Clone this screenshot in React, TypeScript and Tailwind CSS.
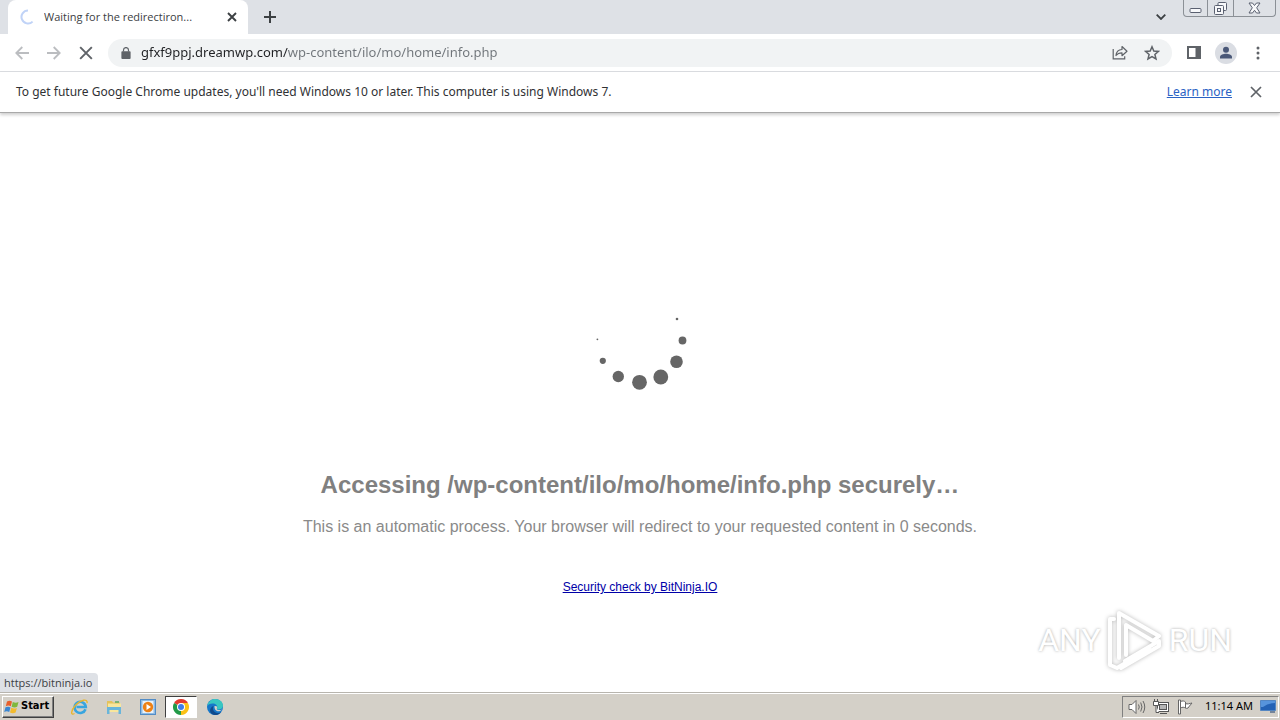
import type { ReactNode } from "react";

interface Dot {
  x: number;
  y: number;
  r: number;
}

const DOTS: Dot[] = [
  { x: 87, y: 29, r: 1.3 },
  { x: 92.5, y: 50.5, r: 3.9 },
  { x: 86.5, y: 71.7, r: 6.3 },
  { x: 70.8, y: 87, r: 7.4 },
  { x: 49.5, y: 92.3, r: 7.4 },
  { x: 28.3, y: 86.5, r: 5.7 },
  { x: 12.8, y: 70.8, r: 3.1 },
  { x: 7.4, y: 49.3, r: 0.9 },
];

const UI_FONT = "font-['Noto_Sans','Open_Sans',sans-serif]";
const SMALL_FONT = "font-['Open_Sans','Noto_Sans',sans-serif]";

function IconButton({ label, className = "", children }: { label: string; className?: string; children: ReactNode }) {
  return (
    <button type="button" aria-label={label} className={`flex shrink-0 items-center justify-center ${className}`}>
      {children}
    </button>
  );
}

function CloseIcon({ className = "" }: { className?: string }) {
  return (
    <svg viewBox="0 0 12 12" className={className} fill="none" stroke="currentColor" strokeWidth="1.7">
      <path d="M1 1l10 10M11 1L1 11" />
    </svg>
  );
}

function TabStrip() {
  return (
    <div className="flex h-[34px] bg-[#dee1e6] pl-2">
      <div className="flex w-60 items-center rounded-t-lg bg-white pr-2 pl-3">
        <svg viewBox="0 0 16 16" className="h-4 w-4" fill="none" stroke="#c0d3f7" strokeWidth="2">
          <path d="M8 1.5A6.5 6.5 0 1 0 12.6 12.6" />
        </svg>
        <span className={`ml-2 flex-1 truncate text-[11px] text-[#3c4043] ${SMALL_FONT}`}>Waiting for the redirectiron...</span>
        <IconButton label="Close tab" className="h-4 w-4 text-[#3c4043]">
          <svg viewBox="0 0 10 10" className="h-2.5 w-2.5" stroke="currentColor" strokeWidth="1.9">
            <path d="M1 1l8 8M9 1L1 9" />
          </svg>
        </IconButton>
      </div>
      <IconButton label="New tab" className="ml-2 h-[34px] w-7 text-[#3c4043]">
        <svg viewBox="0 0 12 12" className="h-3 w-3" stroke="currentColor" strokeWidth="2">
          <path d="M6 0v12M0 6h12" />
        </svg>
      </IconButton>
      <div className="flex-1" />
      <IconButton label="Search tabs" className="mr-3 h-[34px] w-5 text-[#3c4043]">
        <svg viewBox="0 0 10 6" className="h-1.5 w-2.5" fill="none" stroke="currentColor" strokeWidth="1.8">
          <path d="M.7.7L5 5 9.300.7" />
        </svg>
      </IconButton>
      <div className="mr-1 flex h-[17px] rounded-b-[4px] border border-t-0 border-[#8b9096] text-[#5a6070]">
        <IconButton label="Minimize" className="w-6 border-r border-[#8b9096]">
          <svg viewBox="0 0 13 12" className="h-3 w-[13px]" fill="#f7f8fa" stroke="currentColor">
            <rect x="1" y="6.500" width="11" height="4" rx="1" />
          </svg>
        </IconButton>
        <IconButton label="Restore" className="w-[26px] border-r border-[#8b9096]">
          <svg viewBox="0 0 13 13" className="h-[13px] w-[13px]" fill="#f7f8fa" stroke="currentColor">
            <rect x="4" y=".5" width="8.500" height="8" rx="1" />
            <rect x=".5" y="3.500" width="9" height="9" rx="1" />
            <rect x="3.500" y="6.500" width="3" height="3" />
          </svg>
        </IconButton>
        <IconButton label="Close window" className="w-[41px]">
          <svg viewBox="0 0 13 12" className="h-3 w-[13px]" fill="#f7f8fa" stroke="currentColor">
            <path d="M1 1h3.500l2 2.500L8.500 1H12L8.700 5.800 12 11H8.500l-2-2.700L4.500 11H1l3.300-5.200z" />
          </svg>
        </IconButton>
      </div>
    </div>
  );
}

function Toolbar() {
  return (
    <div className="flex h-[38px] items-center border-b border-[#dadce0] bg-white pr-2.5 pl-2">
      <IconButton label="Back" className="h-7 w-7 text-[#bbbdc0]">
        <svg viewBox="0 0 14 14" className="h-3.5 w-3.5" fill="none" stroke="currentColor" strokeWidth="1.8">
          <path d="M14 7H1.500M7.300 1L1.300 7l6 6" />
        </svg>
      </IconButton>
      <IconButton label="Forward" className="ml-1 h-7 w-7 text-[#bbbdc0]">
        <svg viewBox="0 0 14 14" className="h-3.5 w-3.5" fill="none" stroke="currentColor" strokeWidth="1.8">
          <path d="M0 7h12.500M6.700 1l6 6-6 6" />
        </svg>
      </IconButton>
      <IconButton label="Stop loading" className="ml-1 h-7 w-7 text-[#5f6368]">
        <CloseIcon className="h-3.5 w-3.5" />
      </IconButton>
      <div className="ml-2 flex h-7 min-w-0 flex-1 items-center rounded-full bg-[#f1f3f4] pr-2 pl-[13px]">
        <svg viewBox="0 0 10 13" className="mr-2.5 h-3 w-2.5 shrink-0" fill="none">
          <rect x="0" y="4.500" width="10" height="8.500" rx="1" fill="#5f6368" />
          <path d="M2.300 5V3.300a2.700 2.700 0 0 1 5.400 0V5" stroke="#5f6368" strokeWidth="1.300" />
        </svg>
        <input
          type="text"
          aria-label="Address"
          defaultValue="gfxf9ppj.dreamwp.com/wp-content/ilo/mo/home/info.php"
          className="min-w-0 flex-1 bg-[linear-gradient(90deg,#202124_147px,#70757a_147px)] bg-clip-text text-[13px] text-transparent outline-none"
        />
        <IconButton label="Share" className="h-6 w-6 text-[#5f6368]">
          <svg viewBox="0 0 16 15" className="h-[15px] w-4" fill="none" stroke="currentColor" strokeWidth="1.200">
            <path d="M1.200 4v9.800h11.500v-2.500" />
            <path d="M4 10.500C4.300 6.500 6.500 4.700 10 4.500V1.500l5 4.700-5 4.500V7.800C7.300 7.800 5.500 8.500 4 10.500z" strokeLinejoin="round" />
          </svg>
        </IconButton>
        <IconButton label="Bookmark this tab" className="ml-2 h-6 w-6 text-[#5f6368]">
          <svg viewBox="0 0 16 16" className="h-4 w-4" fill="none" stroke="currentColor" strokeWidth="1.500">
            <path d="M8 1.800l1.800 4.200 4.600.4-3.500 3 1.100 4.500L8 11.500l-4 2.400 1.100-4.500-3.500-3L6.200 6z" />
          </svg>
        </IconButton>
      </div>
      <IconButton label="Side panel" className="ml-2.5 h-6 w-6">
        <svg viewBox="0 0 14 13" className="h-[13px] w-3.5">
          <path d="M0 0h14v13H0zM2 2v9h6.500V2z" fill="#5f6368" fillRule="evenodd" />
        </svg>
      </IconButton>
      <IconButton label="Profile" className="ml-2 h-6 w-6">
        <svg viewBox="0 0 22 22" className="h-[22px] w-[22px]">
          <circle cx="11" cy="11" r="11" fill="#dadde3" />
          <circle cx="11" cy="7.700" r="3" fill="#4a5878" />
          <path d="M5 16.500v-1.500c0-2.200 3.500-3.200 6-3.200s6 1 6 3.200v1.500z" fill="#4a5878" />
        </svg>
      </IconButton>
      <IconButton label="Menu" className="ml-2 h-6 w-6">
        <svg viewBox="0 0 4 14" className="h-3.5 w-1" fill="#5f6368">
          <circle cx="2" cy="2" r="1.500" />
          <circle cx="2" cy="7" r="1.500" />
          <circle cx="2" cy="12" r="1.500" />
        </svg>
      </IconButton>
    </div>
  );
}

function UpdateBar() {
  return (
    <div className="z-10 flex h-[41px] items-center border-b border-[#a9a9a9] bg-white pr-4 pl-4 text-xs text-[#303134] shadow-[0_2px_3px_#d0d0d0]">
      <p className="flex-1">To get future Google Chrome updates, you'll need Windows 10 or later. This computer is using Windows 7.</p>
      <a href="#update" className="text-[#2a62c4] underline">Learn more</a>
      <IconButton label="Dismiss" className="ml-4 h-4 w-4 text-[#5f6368]">
        <CloseIcon className="h-3 w-3" />
      </IconButton>
    </div>
  );
}

function Watermark() {
  return (
    <div className="absolute right-12 bottom-5 flex items-center font-['Roboto','Liberation_Sans',sans-serif] text-[32px] leading-none font-normal text-white [text-shadow:0_0_3px_#a8a8a8]">
      <span>ANY</span>
      <svg viewBox="0 0 60 64" className="mx-1 h-16 w-[60px] drop-shadow-[0_0_2px_#b8b8b8]" fill="none" stroke="#fff" strokeWidth="4" strokeLinejoin="round" strokeLinecap="round">
        <path d="M14 50V5l40 23-6 5-27-16v30" />
        <path d="M9 11H5v46l7 3 32-19" />
        <path d="M16 60l38-22v-5L20 53" />
      </svg>
      <span>RUN</span>
    </div>
  );
}

function RedirectPage() {
  return (
    <main className="relative flex flex-1 flex-col items-center bg-white pt-[177px] text-center font-['Liberation_Sans',Arial,sans-serif] text-[#808080]">
      <svg viewBox="0 0 100 100" className="h-[100px] w-[100px]" fill="#666" role="img" aria-label="Loading">
        {DOTS.map((dot) => (
          <circle key={dot.x} cx={dot.x} cy={dot.y} r={dot.r} />
        ))}
      </svg>
      <h1 className="mt-[81px] text-2xl leading-7 font-bold">Accessing /wp-content/ilo/mo/home/info.php securely…</h1>
      <p className="mt-4 text-base leading-6 text-[#8a8a8a]">
        This is an automatic process. Your browser will redirect to your requested content in 0 seconds.
      </p>
      <a href="https://bitninja.io" className="mt-10 text-xs leading-4 text-[#0000a8] underline">Security check by BitNinja.IO</a>
      <Watermark />
      <div className={`absolute bottom-0 left-0 rounded-tr-[4px] bg-[#dee1e6] py-px pr-1.5 pl-1 text-[11px] leading-[17px] text-[#3c4043] ${SMALL_FONT}`}>
        https://bitninja.io
      </div>
    </main>
  );
}

function Taskbar() {
  return (
    <footer className="flex h-7 items-center border-t border-[#b8b5ae] bg-[#d4d0c8] pr-px pl-0.5 text-[11px] text-black shadow-[inset_0_1px_0_#fff]">
      <button
        type="button"
        className="flex h-[22px] w-[52px] items-center gap-px border border-t-white border-r-[#404040] border-b-[#404040] border-l-white pl-px font-['DejaVu_Sans_Condensed','Noto_Sans',sans-serif] font-bold shadow-[inset_-1px_-1px_0_#808080]"
      >
        <svg viewBox="0 0 16 16" className="h-4 w-4 shrink-0">
          <path d="M3 2.500c2-1.200 3.500-1 5 0L6.800 7.300c-1.600-1-3.200-1-5-.1z" fill="#e8602c" />
          <path d="M8.800 3c2 1 3.800 1 5.700 0l-1.300 4.800c-1.900 1-3.700.9-5.600-.1z" fill="#7fb83c" />
          <path d="M1.500 8.300c1.800-.9 3.400-.9 5 .1L5.200 13c-1.600-1-3.200-1-5-.1z" fill="#3a86d2" />
          <path d="M7.300 8.800c1.900 1 3.700 1.100 5.600.1l-1.300 4.700c-1.900 1-3.700.9-5.600-.1z" fill="#f3bb2e" />
        </svg>
        Start
      </button>
      <div className="ml-[9px] flex items-center">
        <IconButton label="Internet Explorer" className="h-[22px] w-[34px]">
          <svg viewBox="0 0 18 18" className="h-[18px] w-[18px]" fill="none">
            <path d="M14.500 11.300A5.600 5.600 0 1 1 14.800 9H5.500" stroke="#38a5df" strokeWidth="2.600" />
            <path d="M3.500 15.500C-.500 18-.300 12.500 4.500 7.200 9.500 1.700 17 .200 16 5" stroke="#e9b52c" strokeWidth="1.400" />
          </svg>
        </IconButton>
        <IconButton label="File Explorer" className="h-[22px] w-[34px]">
          <svg viewBox="0 0 16 16" className="h-4 w-4">
            <path d="M1 2h5l1 1.500h7V13H1z" fill="#e4c25c" />
            <path d="M2 4.500h13V13H2z" fill="#f8e69d" />
            <path d="M1 8h14v7h-2.500v-4h-9v4H1z" fill="#69b5db" />
            <path d="M9 3h4" stroke="#5eaa62" strokeWidth="1.500" />
          </svg>
        </IconButton>
        <IconButton label="Media Player" className="h-[22px] w-[34px]">
          <svg viewBox="0 0 16 16" className="h-4 w-4">
            <rect x=".5" y=".5" width="15" height="15" fill="#8dbbe4" stroke="#528cc5" />
            <rect x="2.500" y="2" width="11" height="12" fill="#e9f2fa" />
            <circle cx="8" cy="8" r="5.200" fill="#ed8115" />
            <path d="M6.500 5l4.500 3-4.500 3z" fill="#fff" />
          </svg>
        </IconButton>
        <IconButton label="Google Chrome" className="h-[22px] w-8 border border-t-[#404040] border-r-white border-b-white border-l-[#404040] bg-white">
          <svg viewBox="0 0 16 16" className="h-4 w-4">
            <path d="M8 8L1.070 4A8 8 0 0 1 14.930 4z" fill="#e33b2e" />
            <path d="M8 8l6.930-4A8 8 0 0 1 8 16z" fill="#fbc116" />
            <path d="M8 8v8A8 8 0 0 1 1.070 4z" fill="#229a48" />
            <path d="M8 4h6.930L11.460 10 8 16l3.400-6z" fill="#fbc116" />
            <circle cx="8" cy="8" r="4" fill="#fff" />
            <circle cx="8" cy="8" r="3" fill="#3f7de8" />
          </svg>
        </IconButton>
        <IconButton label="Microsoft Edge" className="h-[22px] w-9">
          <svg viewBox="0 0 16 16" className="h-4 w-4">
            <circle cx="8" cy="8" r="8" fill="#1677c9" />
            <path d="M.2 7C1 2.700 4.500 0 8.200 0c4.600 0 7.800 3.200 7.800 6.500 0 2.700-2 4-4.200 4-1.500 0-2.300-.7-1.700-1.500C11 6.500 8.500 4.500 5.500 4.500 3 4.500 1 5.500.2 7z" fill="#38c6c1" />
            <path d="M6.500 7c-1.700 3.500.8 7 4.500 7 1.600 0 2.700-.5 3.500-1.300C12.500 16 8 17 5 15 2 13 2.500 8.500 6.500 7z" fill="#114a8c" />
            <path d="M7.500 7c2.700-.5 3 1.300 2.400 2.200-.7 1.400 1.600 2.500 5.100 1.300-2.500 3.300-8 2-7.500-3.500z" fill="#d4d0c8" />
          </svg>
        </IconButton>
      </div>
      <div className="flex-1" />
      <div className="flex h-[22px] items-center border border-t-[#808080] border-r-white border-b-white border-l-[#808080] pr-px pl-1">
        <IconButton label="Volume" className="h-5 w-5">
          <svg viewBox="0 0 18 16" className="h-4 w-[18px]" fill="none" stroke="#666">
            <path d="M1 5.500h3l4-4v13l-4-4H1z" fill="#fff" />
            <path d="M10.500 5.500q1.500 2.500 0 5M12.700 3.500q2.600 4.500 0 9M15 2q3.500 6 0 12" />
          </svg>
        </IconButton>
        <IconButton label="Network" className="ml-1 h-5 w-5">
          <svg viewBox="0 0 18 16" className="h-4 w-[18px]" fill="#fff" stroke="#555">
            <rect x="5.500" y="3.500" width="11" height="9" />
            <rect x="7.500" y="5.500" width="7" height="5" fill="#b5b5b5" />
            <path d="M8 14.500h7M2.500 0v2M5.500 0v2M1.500 2.500h5v4h-5zM4 6.500v7h3" />
          </svg>
        </IconButton>
        <IconButton label="Action Center" className="ml-1 h-5 w-5">
          <svg viewBox="0 0 16 16" className="h-4 w-4" fill="#fff" stroke="#666">
            <path d="M1.500 1h2v14h-2zM3.500 2.500c2-1 4-.5 5 .5v6c-1.500-1-3-1-5 0zM8.500 4.500c2 1 4 0 6.500-.5L12.500 7l-1.500 2c-1 .5-1.500.5-2.500 0z" />
          </svg>
        </IconButton>
        <time className="ml-2.5">11:14 AM</time>
        <IconButton label="Show desktop" className="ml-1.5 h-5 w-[18px]">
          <svg viewBox="0 0 16 13" className="h-[13px] w-4">
            <path d="M.5.500h15v10H.5z" fill="#2462b5" stroke="#5486c2" />
            <path d="M1 1h14v2Q8 3 3 7H1z" fill="#5794dc" />
            <path d="M10 12h5" stroke="#173a6d" />
          </svg>
        </IconButton>
      </div>
    </footer>
  );
}

export default function App() {
  return (
    <div className={`flex min-h-screen flex-col bg-white ${UI_FONT}`}>
      <header>
        <TabStrip />
        <Toolbar />
      </header>
      <UpdateBar />
      <RedirectPage />
      <Taskbar />
    </div>
  );
}
